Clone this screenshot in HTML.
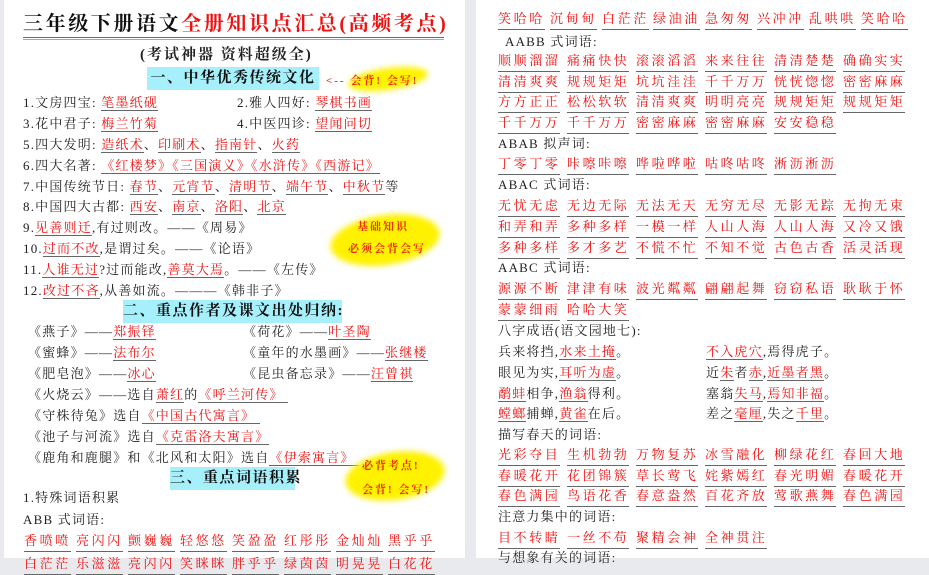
<!DOCTYPE html>
<html><head><meta charset="utf-8"><style>
*{margin:0;padding:0;box-sizing:border-box}
body{width:929px;height:558px;overflow:hidden;background:#e9eaee;position:relative;font-family:"Liberation Serif","Noto Serif CJK SC",serif;color:#222}
.pg{position:absolute;top:0;height:558px;background:#fff}
.l{position:absolute;white-space:nowrap;font-size:13px;line-height:20px;letter-spacing:1.2px}
.r{color:#f01010}
.u{color:#f01010;border-bottom:1px solid #666;padding-bottom:0}
.h{position:absolute;background:#a6f0fb;font-weight:bold;font-size:15px;line-height:23px;text-align:center;letter-spacing:1.5px;color:#111;white-space:nowrap}
.yb{position:absolute;background:#fff200;border-radius:50%;filter:blur(3px);transform:rotate(-8deg)}
.yt{position:absolute;color:#e83000;font-size:11px;font-weight:bold;letter-spacing:2px;white-space:nowrap}
.g{position:absolute;white-space:nowrap;font-size:13px;line-height:20px;letter-spacing:2.6px}
.g span{position:absolute;color:#f01010;border-bottom:1px solid #666}
</style></head><body>
<div class="pg" style="left:4px;width:461px"></div>
<div class="pg" style="left:476px;width:453px"></div>

<div class="l" style="left:23px;top:11px;font-size:20px;line-height:26px;font-weight:bold;letter-spacing:2.6px;color:#111">三年级下册语文<span class="r">全册知识点汇总(高频考点)</span></div>
<div style="position:absolute;left:23px;top:37px;width:421px;height:3px;border-top:1px solid #e33;border-bottom:1px solid #e88"></div>
<div class="l" style="left:140px;top:44px;font-size:15px;font-weight:bold;line-height:22px;letter-spacing:2px">(考试神器 资料超级全)</div>

<div class="h" style="left:147px;top:67px;width:172px">一、中华优秀传统文化</div>
<div class="yb" style="left:348px;top:68px;width:80px;height:22px"></div>
<div class="yt" style="left:326px;top:72px">&lt;-- 会背! 会写!</div>

<div class="l" style="left:23px;top:93px">1.文房四宝: <span class="u">笔墨纸砚</span></div>
<div class="l" style="left:237px;top:93px">2.雅人四好: <span class="u">琴棋书画</span></div>
<div class="l" style="left:23px;top:114px">3.花中君子: <span class="u">梅兰竹菊</span></div>
<div class="l" style="left:237px;top:114px">4.中医四诊: <span class="u">望闻问切</span></div>
<div class="l" style="left:23px;top:135px">5.四大发明: <span class="u">造纸术</span>、<span class="u">印刷术</span>、<span class="u">指南针</span>、<span class="u">火药</span></div>
<div class="l" style="left:23px;top:156px">6.四大名著: <span class="u">《红楼梦》《三国演义》《水浒传》《西游记》</span></div>
<div class="l" style="left:23px;top:177px">7.中国传统节日: <span class="u">春节</span>、<span class="u">元宵节</span>、<span class="u">清明节</span>、<span class="u">端午节</span>、<span class="u">中秋节</span>等</div>
<div class="l" style="left:23px;top:197px">8.中国四大古都: <span class="u">西安</span>、<span class="u">南京</span>、<span class="u">洛阳</span>、<span class="u">北京</span></div>
<div class="l" style="left:23px;top:218px">9.<span class="u">见善则迁</span>,有过则改。——《周易》</div>
<div class="l" style="left:23px;top:239px">10.<span class="u">过而不改</span>,是谓过矣。——《论语》</div>
<div class="l" style="left:23px;top:260px">11.<span class="u">人谁无过</span>?过而能改,<span class="u">善莫大焉</span>。——《左传》</div>
<div class="l" style="left:23px;top:281px">12.<span class="u">改过不吝</span>,从善如流。———《韩非子》</div>
<div class="yb" style="left:330px;top:215px;width:110px;height:50px"></div>
<div class="yt" style="left:357px;top:218px">基础知识</div>
<div class="yt" style="left:348px;top:240px">必须会背会写</div>

<div class="h" style="left:123px;top:300px;width:219px">二、重点作者及课文出处归纳:</div>
<div class="l" style="left:28px;top:322px">《燕子》——<span class="u">郑振铎</span></div>
<div class="l" style="left:243px;top:322px">《荷花》——<span class="u">叶圣陶</span></div>
<div class="l" style="left:28px;top:343px">《蜜蜂》——<span class="u">法布尔</span></div>
<div class="l" style="left:243px;top:343px">《童年的水墨画》——<span class="u">张继楼</span></div>
<div class="l" style="left:28px;top:364px">《肥皂泡》——<span class="u">冰心</span></div>
<div class="l" style="left:243px;top:364px">《昆虫备忘录》——<span class="u">汪曾祺</span></div>
<div class="l" style="left:28px;top:385px">《火烧云》——选自<span class="u">萧红</span>的<span class="u">《呼兰河传》&nbsp;</span></div>
<div class="l" style="left:28px;top:406px">《守株待兔》选自<span class="u">《中国古代寓言》&nbsp;</span></div>
<div class="l" style="left:28px;top:427px">《池子与河流》选自<span class="u">《克雷洛夫寓言》</span></div>
<div class="l" style="left:28px;top:448px">《鹿角和鹿腿》和《北风和太阳》选自<span class="u">《伊索寓言》&nbsp;</span></div>
<div class="yb" style="left:345px;top:452px;width:100px;height:48px"></div>
<div class="yt" style="left:362px;top:457px">必背考点!</div>
<div class="yt" style="left:362px;top:481px">会背! 会写!</div>

<div class="h" style="left:170px;top:467px;width:125px">三、重点词语积累</div>
<div class="l" style="left:23px;top:488px">1.特殊词语积累</div>
<div class="l" style="left:23px;top:510px">ABB 式词语:</div>
<div class="g" style="left:24px;top:531px;width:440px">
<span style="left:0">香喷喷</span><span style="left:52px">亮闪闪</span><span style="left:104px">颤巍巍</span><span style="left:156px">轻悠悠</span><span style="left:208px">笑盈盈</span><span style="left:260px">红彤彤</span><span style="left:312px">金灿灿</span><span style="left:364px">黑乎乎</span></div>
<div class="g" style="left:24px;top:554px;width:440px">
<span style="left:0">白茫茫</span><span style="left:52px">乐滋滋</span><span style="left:104px">亮闪闪</span><span style="left:156px">笑眯眯</span><span style="left:208px">胖乎乎</span><span style="left:260px">绿茵茵</span><span style="left:312px">明晃晃</span><span style="left:364px">白花花</span></div>

<!-- right page -->
<div class="g" style="left:498px;top:9px">
<span style="left:0">笑哈哈</span><span style="left:52px">沉甸甸</span><span style="left:104px">白茫茫</span><span style="left:155px">绿油油</span><span style="left:207px">急匆匆</span><span style="left:259px">兴冲冲</span><span style="left:311px">乱哄哄</span><span style="left:363px">笑哈哈</span></div>
<div class="l" style="left:505px;top:32px">AABB 式词语:</div>
<div class="g" style="left:498px;top:51px"><span style="left:0">顺顺溜溜</span><span style="left:69px">痛痛快快</span><span style="left:138px">滚滚滔滔</span><span style="left:207px">来来往往</span><span style="left:276px">清清楚楚</span><span style="left:345px">确确实实</span></div>
<div class="g" style="left:498px;top:72px"><span style="left:0">清清爽爽</span><span style="left:69px">规规矩矩</span><span style="left:138px">坑坑洼洼</span><span style="left:207px">千千万万</span><span style="left:276px">恍恍惚惚</span><span style="left:345px">密密麻麻</span></div>
<div class="g" style="left:498px;top:92px"><span style="left:0">方方正正</span><span style="left:69px">松松软软</span><span style="left:138px">清清爽爽</span><span style="left:207px">明明亮亮</span><span style="left:276px">规规矩矩</span><span style="left:345px">规规矩矩</span></div>
<div class="g" style="left:498px;top:113px"><span style="left:0">千千万万</span><span style="left:69px">千千万万</span><span style="left:138px">密密麻麻</span><span style="left:207px">密密麻麻</span><span style="left:276px">安安稳稳</span></div>
<div class="l" style="left:498px;top:134px">ABAB 拟声词:</div>
<div class="g" style="left:498px;top:154px"><span style="left:0">丁零丁零</span><span style="left:69px">咔嚓咔嚓</span><span style="left:138px">哗啦哗啦</span><span style="left:207px">咕咚咕咚</span><span style="left:276px">淅沥淅沥</span></div>
<div class="l" style="left:498px;top:175px">ABAC 式词语:</div>
<div class="g" style="left:498px;top:196px"><span style="left:0">无忧无虑</span><span style="left:69px">无边无际</span><span style="left:138px">无法无天</span><span style="left:207px">无穷无尽</span><span style="left:276px">无影无踪</span><span style="left:345px">无拘无束</span></div>
<div class="g" style="left:498px;top:217px"><span style="left:0">和弄和弄</span><span style="left:69px">多种多样</span><span style="left:138px">一模一样</span><span style="left:207px">人山人海</span><span style="left:276px">人山人海</span><span style="left:345px">又冷又饿</span></div>
<div class="g" style="left:498px;top:238px"><span style="left:0">多种多样</span><span style="left:69px">多才多艺</span><span style="left:138px">不慌不忙</span><span style="left:207px">不知不觉</span><span style="left:276px">古色古香</span><span style="left:345px">活灵活现</span></div>
<div class="l" style="left:498px;top:258px">AABC 式词语:</div>
<div class="g" style="left:498px;top:279px"><span style="left:0">源源不断</span><span style="left:69px">津津有味</span><span style="left:138px">波光粼粼</span><span style="left:207px">翩翩起舞</span><span style="left:276px">窃窃私语</span><span style="left:345px">耿耿于怀</span></div>
<div class="g" style="left:498px;top:300px"><span style="left:0">蒙蒙细雨</span><span style="left:69px">哈哈大笑</span></div>
<div class="l" style="left:498px;top:321px">八字成语(语文园地七):</div>
<div class="l" style="left:498px;top:342px">兵来将挡,<span class="u">水来土掩</span>。</div>
<div class="l" style="left:706px;top:342px"><span class="u">不入虎穴</span>,焉得虎子。</div>
<div class="l" style="left:498px;top:363px">眼见为实,<span class="u">耳听为虚</span>。</div>
<div class="l" style="left:706px;top:363px">近<span class="u">朱</span>者<span class="u">赤</span>,<span class="u">近墨者黑</span>。</div>
<div class="l" style="left:498px;top:384px"><span class="u">鹬蚌</span>相争,<span class="u">渔翁</span>得利。</div>
<div class="l" style="left:706px;top:384px">塞翁<span class="u">失马</span>,<span class="u">焉知非福</span>。</div>
<div class="l" style="left:498px;top:404px"><span class="u">螳螂</span>捕蝉,<span class="u">黄雀</span>在后。</div>
<div class="l" style="left:706px;top:404px">差之<span class="u">毫厘</span>,失之<span class="u">千里</span>。</div>
<div class="l" style="left:498px;top:425px">描写春天的词语:</div>
<div class="g" style="left:498px;top:445px"><span style="left:0">光彩夺目</span><span style="left:69px">生机勃勃</span><span style="left:138px">万物复苏</span><span style="left:207px">冰雪融化</span><span style="left:276px">柳绿花红</span><span style="left:345px">春回大地</span></div>
<div class="g" style="left:498px;top:466px"><span style="left:0">春暖花开</span><span style="left:69px">花团锦簇</span><span style="left:138px">草长莺飞</span><span style="left:207px">姹紫嫣红</span><span style="left:276px">春光明媚</span><span style="left:345px">春暖花开</span></div>
<div class="g" style="left:498px;top:486px"><span style="left:0">春色满园</span><span style="left:69px">鸟语花香</span><span style="left:138px">春意盎然</span><span style="left:207px">百花齐放</span><span style="left:276px">莺歌燕舞</span><span style="left:345px">春色满园</span></div>
<div class="l" style="left:498px;top:507px">注意力集中的词语:</div>
<div class="g" style="left:498px;top:528px"><span style="left:0">目不转睛</span><span style="left:69px">一丝不苟</span><span style="left:138px">聚精会神</span><span style="left:207px">全神贯注</span></div>
<div class="l" style="left:498px;top:548px">与想象有关的词语:</div>
</body></html>
